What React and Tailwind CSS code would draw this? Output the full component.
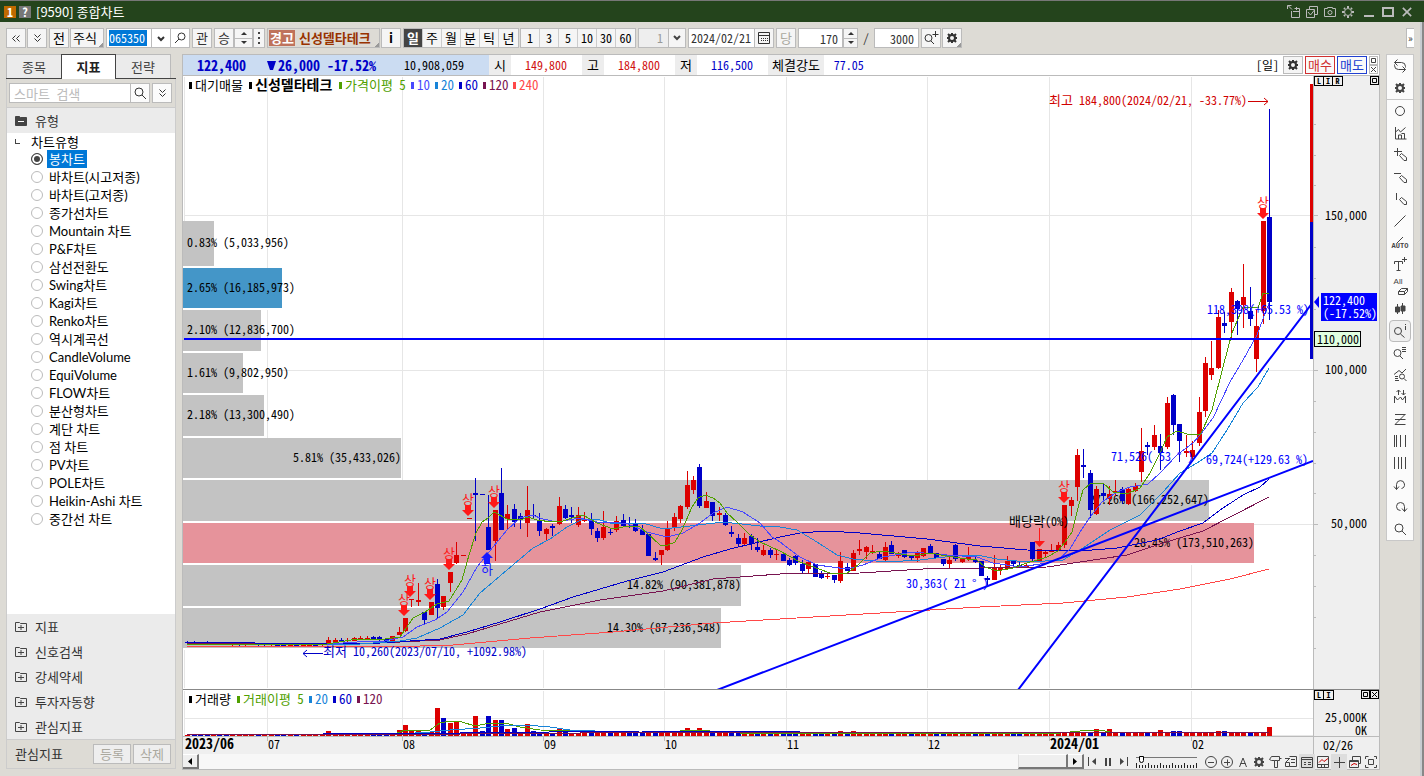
import { useState } from "react";
import clsx from "clsx";

const RED = "#dc0000";
const BLUE = "#0000c8";

// direction, high, body top, body bottom, low (y on the price pane)
const CANDLES = [
    ["d", 641, 642, 643, 644], ["d", 641, 642, 643, 644], ["d", 642, 642, 643, 644], ["d", 641, 642, 644, 645],
    ["u", 642, 643, 644, 645], ["d", 642, 643, 644, 645], ["d", 643, 643, 645, 645], ["u", 643, 643, 645, 646],
    ["d", 643, 644, 645, 646], ["u", 643, 644, 645, 646], ["u", 643, 644, 645, 645], ["d", 643, 644, 645, 646],
    ["d", 644, 644, 645, 646], ["u", 643, 644, 645, 646], ["d", 644, 645, 646, 646], ["d", 644, 645, 646, 646],
    ["u", 644, 645, 646, 646], ["d", 644, 645, 646, 647], ["u", 644, 645, 646, 646], ["u", 644, 645, 646, 646],
    ["d", 644, 645, 646, 646], ["u", 643, 644, 645, 646], ["u", 637, 640, 643, 643], ["u", 638, 640, 642, 642],
    ["d", 638, 640, 642, 642], ["u", 638, 640, 641, 642], ["u", 637, 638, 641, 641], ["u", 636, 638, 639, 640],
    ["u", 636, 638, 639, 640], ["d", 636, 637, 639, 639], ["d", 636, 637, 639, 641], ["d", 638, 639, 642, 643],
    ["u", 636, 636, 641, 641], ["u", 627, 632, 635, 635], ["u", 618, 618, 631, 632], ["u", 599, 599, 600, 607],
    ["u", 583, 600, 602, 606], ["d", 612, 612, 620, 625], ["u", 602, 602, 615, 615], ["d", 579, 584, 608, 619],
    ["u", 596, 596, 607, 610], ["u", 572, 572, 583, 592], ["u", 542, 555, 563, 564], ["u", 555, 555, 556, 556],
    ["u", 518, 518, 519, 519], ["d", 478, 493, 495, 541], ["d", 494, 494, 495, 495], ["d", 495, 527, 550, 550],
    ["u", 510, 510, 541, 561], ["d", 468, 493, 530, 530], ["u", 505, 514, 519, 529], ["d", 504, 509, 522, 527],
    ["d", 513, 516, 519, 529], ["u", 486, 510, 523, 537], ["d", 504, 515, 516, 518], ["d", 513, 520, 531, 536],
    ["u", 528, 529, 534, 540], ["d", 524, 526, 528, 536], ["u", 497, 506, 524, 525], ["d", 505, 509, 518, 519],
    ["d", 507, 515, 517, 523], ["u", 507, 515, 525, 527], ["u", 512, 520, 521, 522], ["d", 513, 521, 529, 535],
    ["d", 528, 531, 538, 542], ["u", 511, 527, 538, 540], ["d", 529, 532, 533, 535], ["u", 516, 521, 530, 532],
    ["d", 514, 520, 526, 526], ["d", 517, 523, 524, 528], ["d", 519, 524, 531, 532], ["d", 525, 530, 535, 535],
    ["d", 534, 534, 556, 556], ["d", 552, 558, 560, 561], ["u", 550, 550, 555, 565], ["u", 521, 529, 550, 551],
    ["u", 513, 517, 527, 531], ["u", 505, 506, 519, 523], ["u", 471, 485, 507, 509], ["u", 476, 480, 490, 494],
    ["d", 464, 467, 506, 508], ["u", 492, 501, 508, 508], ["d", 502, 502, 516, 521], ["u", 507, 513, 515, 521],
    ["d", 513, 515, 525, 526], ["d", 526, 532, 534, 537], ["d", 534, 538, 544, 546], ["u", 533, 538, 544, 545],
    ["d", 534, 536, 544, 550], ["d", 538, 547, 550, 552], ["u", 545, 550, 555, 556], ["d", 548, 550, 555, 558],
    ["u", 550, 554, 555, 560], ["d", 554, 554, 561, 561], ["d", 558, 560, 565, 566], ["d", 555, 556, 563, 565],
    ["d", 560, 564, 571, 573], ["u", 562, 562, 569, 573], ["d", 564, 564, 577, 577], ["d", 571, 573, 578, 579],
    ["u", 573, 576, 577, 579], ["d", 575, 575, 580, 583], ["u", 552, 561, 581, 583], ["d", 563, 567, 571, 571],
    ["u", 550, 553, 571, 571], ["u", 540, 549, 551, 555], ["u", 546, 547, 552, 559], ["u", 545, 551, 553, 554],
    ["d", 552, 554, 559, 559], ["u", 542, 547, 560, 562], ["d", 541, 545, 554, 554], ["u", 552, 554, 556, 558],
    ["d", 550, 550, 557, 558], ["d", 556, 556, 558, 561], ["u", 551, 553, 558, 562], ["u", 548, 548, 556, 557],
    ["d", 544, 546, 553, 553], ["d", 553, 553, 558, 558], ["d", 559, 559, 564, 566], ["u", 556, 560, 564, 568],
    ["d", 544, 545, 559, 561], ["u", 559, 559, 562, 563], ["u", 547, 556, 559, 561], ["d", 556, 560, 562, 563],
    ["d", 561, 561, 576, 576], ["d", 576, 578, 580, 585], ["u", 555, 567, 580, 580], ["u", 565, 567, 570, 575],
    ["u", 556, 561, 569, 570], ["d", 561, 561, 564, 566], ["d", 562, 565, 567, 568], ["u", 563, 565, 567, 568],
    ["d", 542, 542, 559, 561], ["u", 549, 549, 561, 561], ["u", 550, 552, 554, 557], ["u", 544, 550, 552, 552],
    ["u", 542, 545, 550, 550], ["u", 505, 505, 545, 548], ["u", 497, 500, 506, 516], ["u", 449, 455, 487, 501],
    ["d", 449, 465, 467, 478], ["d", 470, 473, 510, 518], ["u", 486, 489, 514, 515], ["d", 483, 493, 496, 500],
    ["u", 486, 494, 499, 505], ["u", 480, 491, 493, 496], ["d", 487, 489, 501, 504], ["u", 487, 489, 504, 505],
    ["u", 483, 486, 491, 492], ["u", 428, 451, 472, 482], ["d", 442, 445, 447, 455], ["u", 425, 435, 447, 450],
    ["d", 434, 446, 453, 470], ["u", 397, 403, 447, 449], ["d", 394, 395, 425, 435], ["d", 424, 424, 441, 462],
    ["u", 435, 451, 453, 457], ["u", 441, 450, 457, 459], ["u", 397, 412, 443, 446], ["u", 357, 363, 411, 417],
    ["u", 341, 368, 375, 380], ["u", 310, 317, 368, 369], ["d", 312, 323, 326, 333], ["u", 288, 292, 322, 338],
    ["d", 300, 301, 309, 335], ["u", 264, 297, 305, 328], ["d", 287, 311, 319, 326], ["u", 310, 326, 359, 372],
    ["u", 221, 221, 311, 324], ["d", 109, 217, 302, 320],
];

const candleX = (i) => Math.round(1269 - (169 - i) * 6.4);

const AVERAGES = [
    ["#ff4848", "187,646 420,646 453,645 530,638 613,632 713,623 780,619 913,611 980,607 1063,603 1127,597 1180,589 1230,579 1269,569"],
    ["#781450", "187,644 380,643 440,640 467,634 500,624 540,612 600,600 663,591 713,579 780,574 860,573 923,569 980,568 1047,567 1080,562 1127,555 1163,543 1203,531 1230,517 1269,497"],
    ["#0000c8", "185,642 254,642 255,643 380,643 440,639 467,632 500,622 540,609 573,597 627,581 663,572 703,557 730,549 780,537 800,533 827,531 860,533 927,539 980,546 1027,550 1080,551 1117,548 1157,540 1180,531 1203,523 1223,508 1243,495 1260,487 1269,479"],
    ["#1884d8", "187,644 360,644 400,641 417,638 440,628 463,615 480,593 507,570 533,548 550,539 567,527 583,519 597,519 610,523 643,523 663,529 690,526 723,522 760,526 780,527 797,530 817,542 837,555 853,559 887,562 920,560 953,556 977,555 997,559 1027,562 1063,560 1083,548 1110,530 1140,515 1163,492 1180,473 1197,463 1212,453 1227,430 1243,403 1258,387 1269,368"],
    ["#4848ff", "187,644 330,644 357,642 385,641 403,637 417,627 435,620 447,612 463,592 477,567 493,547 507,530 520,518 532,515 543,519 557,522 580,518 597,522 613,522 628,524 647,532 667,537 683,533 700,523 713,513 727,507 743,512 760,523 772,537 780,542 800,557 817,565 847,569 863,565 883,557 913,552 947,555 977,557 993,563 1020,567 1047,563 1060,558 1070,549 1080,532 1090,517 1102,502 1117,492 1130,487 1148,484 1160,473 1177,455 1193,443 1200,435 1213,418 1230,382 1243,360 1257,335 1269,303"],
    ["#50a000", "187,644 327,644 345,641 357,639 385,639 400,637 413,618 425,612 437,604 449,601 462,580 469,555 476,533 482,522 488,518 494,512 507,519 520,520 528,517 537,520 552,522 563,521 572,518 583,515 597,523 613,529 628,526 640,527 647,533 660,545 668,545 675,542 682,530 692,507 698,498 705,495 713,498 720,503 727,513 737,522 750,535 760,542 780,551 800,562 830,573 847,573 858,565 870,553 883,551 913,556 930,553 947,556 967,559 977,560 985,567 997,571 1013,568 1027,563 1047,557 1058,551 1065,542 1072,532 1078,508 1083,490 1090,484 1103,483 1113,492 1127,494 1140,488 1150,473 1160,453 1167,437 1177,431 1187,434 1200,435 1212,410 1223,367 1232,333 1243,307 1258,308 1263,293 1269,293"],
];

// y, height, right edge, colour, label, label right edge
const PROFILE = [
    [221, 45, 214, "#c3c3c3", "0.83% (5,033,956)", 289],
    [268, 40, 282, "#4496c8", "2.65% (16,185,973)", 295],
    [310, 41, 261, "#c3c3c3", "2.10% (12,836,700)", 295],
    [353, 40, 243, "#c3c3c3", "1.61% (9,802,950)", 289],
    [395, 41, 264, "#c3c3c3", "2.18% (13,300,490)", 295],
    [438, 40, 401, "#c3c3c3", "5.81% (35,433,026)", 401],
    [480, 41, 1209, "#c3c3c3", "27.26% (166,252,647)", 1209],
    [523, 40, 1254, "#e6939b", "28.45% (173,510,263)", 1254],
    [565, 41, 741, "#c3c3c3", "14.82% (90,381,878)", 741],
    [608, 40, 721, "#c3c3c3", "14.30% (87,236,548)", 721],
];

const MONTHS = [184, 267, 402, 543, 664, 786, 927, 1049, 1191];

// tops of the taller volume bars, the rest stay near the base line
const VOLUME_TOPS = {
    22: 731, 33: 730, 34: 725, 35: 731, 36: 730, 37: 733, 38: 732, 39: 708, 40: 718, 41: 723, 42: 722,
    45: 716, 46: 731, 47: 716, 48: 720, 49: 720, 50: 729, 51: 728, 52: 732, 53: 724, 54: 731, 58: 728,
    59: 731, 65: 732, 77: 731, 78: 728, 79: 730, 80: 728, 81: 731, 102: 731, 104: 731,
    139: 731, 142: 729, 144: 729, 152: 730, 154: 731, 155: 731, 161: 731, 162: 731, 169: 727,
};

// bars coloured by volume change rather than by the candle
const VOLUME_UP = { 39: true, 40: false, 45: true, 169: true };

const CHART_TYPES = [
    "봉차트", "바차트(시고저종)", "바차트(고저종)", "종가선차트", "Mountain 차트", "P&F차트", "삼선전환도",
    "Swing차트", "Kagi차트", "Renko차트", "역시계곡선", "CandleVolume", "EquiVolume", "FLOW차트",
    "분산형차트", "계단 차트", "점 차트", "PV차트", "POLE차트", "Heikin-Ashi 차트", "중간선 차트",
];

const ICONS = {
    doubleLeft: <path d="M7.5 5.5l-3 3 3 3M11.5 5.5l-3 3 3 3" />,
    doubleDown: <path d="M5.5 4.5l3 3 3-3M5.5 8.5l3 3 3-3" />,
    chevron: <path d="M5 7l3 3 3-3" strokeWidth="2" />,
    search: <path d="M11 7a4 4 0 1 1-8 0a4 4 0 1 1 8 0M10 10l4 4" />,
    lensLeft: <path d="M13 6.500a3.500 3.500 0 1 1-7 0a3.500 3.500 0 1 1 7 0M7 9l-4 4" />,
    lensPlus: <path d="M9 8a3.5 3.5 0 1 1-7 0a3.5 3.5 0 1 1 7 0M8 11l3 3M12.500 1v6M9.500 4.500h6" />,
    calendar: <g><path d="M2.500 2.500h11v11h-11zM2.500 5.500h11" /><path d="M5 8.500h7M5 10.500h7" strokeDasharray="1 1" /></g>,
    gear: (
        <g>
            <circle cx="8" cy="8" r="3" strokeWidth="2" />
            <path d="M8 3v2M8 11v2M3 8h2M11 8h2M4 4l2 2M10 10l2 2M4 12l2-2M10 6l2-2" strokeWidth="2" />
        </g>
    ),
    gearThin: (
        <g>
            <circle cx="8" cy="8" r="3.500" />
            <path d="M8 2v2M8 12v2M2 8h2M12 8h2M4 4l1 1M11 11l1 1M4 12l1-1M11 5l1-1" strokeWidth="2" />
        </g>
    ),
    swap: <path d="M5.500 1.500l-3 3 3 3M2.500 4.500h7a4 4 0 0 1 4 4v1M10.500 8.500l3 3-3 3M13.500 11.500h-7a4 4 0 0 1-4-4v-1" />,
    circle: <circle cx="8" cy="8" r="4.500" />,
    trend: <path d="M3.500 2v12h11M3.500 7l3-2.500 2 2.500 5-4.500M6.500 14v-4h3v4M9.500 8.500h3v5.500" />,
    penCross: <g><path d="M5.500 1v8M2 4.500h8" /><path d="M7.500 8.500l2-2 5 4v3h-2.500z" /></g>,
    penFlat: <g><path d="M2 4.500h7" /><path d="M7.500 8.500l2-2 5 4v3h-2.500z" /></g>,
    penTall: <g><path d="M4.500 2v7" /><path d="M7.500 8.500l2-2 5 4v3h-2.500z" /></g>,
    line: <path d="M2.500 13.500l11-11" />,
    textPlus: <path d="M2.500 7v-2.500h8v2.500M6.500 4.500v9M4.500 13.500h4M12.500 0v5M10 2.500h5" />,
    eraser: <path d="M4.500 10.500l3-3h6v3l-3 3h-6zM4.500 10.500h6l3-3M10.500 10.500v3" />,
    candles: <g><path d="M5.500 3v10M10.500 2v11" /><path d="M3.500 6h4v5h-4zM9 5h4v5h-4z" fill="#444" /></g>,
    lensInfo: <path d="M9.500 8a3.500 3.500 0 1 1-7 0a3.500 3.500 0 1 1 7 0M8.500 11l4 3.500M13.500 1v1M13.500 3v4" />,
    lensList: <path d="M9 8a3.500 3.500 0 1 1-7 0a3.500 3.500 0 1 1 7 0M8 11l3 3M10 2.500h4M10 4.500h4M10 6.500h4" />,
    lensTrend: <path d="M2 7.500l5-4 3 2.500 4-4M3 9.500h3M3 11.500h3M3 13.500h4M12.500 9.500a2.500 2.500 0 1 1-5 0a2.500 2.500 0 1 1 5 0M12 11.500l2.500 2.500" />,
    waves: <path d="M2.500 14v-7l3 4 3-3 2 3 3-4v7M6.500 6v-5M4.500 3l2-2 2 2M11.500 1v5M9.500 4l2 2 2-2" />,
    zLines: <path d="M3 3.500h10.500M3 8.500h10.500M3 13.500h10.500M13 3.500l-10 10" />,
    bars1: <path d="M2.500 2v12M4.500 2v12M8.500 2v12M13.500 2v12" />,
    bars2: <path d="M2.500 2v12M6.500 2v12M9.500 2v12M13.500 2v12" />,
    undo: <path d="M4.500 12.500v-5a4 4 0 1 1 5 4M2 9.500l2.500 3 2.500-3" />,
    redo: <path d="M8.500 11.500a4 4 0 1 1 4-4v5M10 9.500l2.500 3 2.500-3" />,
    first: <g><path d="M4.500 3v9" /><path d="M12 4v7l-4-3.500z" fill="#444" stroke="none" /></g>,
    pause: <path d="M6 4v8M10 4v8" strokeWidth="2" />,
    last: <g><path d="M11.500 3v9" /><path d="M4 4v7l4-3.500z" fill="#444" stroke="none" /></g>,
    minus: <g><circle cx="8" cy="8" r="5.500" /><path d="M5 8.500h6" /></g>,
    plus: <g><circle cx="8" cy="8" r="5.500" /><path d="M5 8.500h6M8.500 5.500v6" /></g>,
    letterShape: <path d="M4.500 13l3.500-9 3.500 9M5.500 9.500h5" />,
    hammer: <path d="M2.500 5.500l2-3h8v4h-2v7h-3v-7h-3zM12.500 4.500h2M7.500 6.500h3" />,
    export: <path d="M6.500 2.500h7v10h-7M8 5.500h4M8 8.500h4M2.500 8.500h4v4h-4zM3 8l4-4M2 4.500h4" />,
    panel: <path d="M2.500 3.500h11v10h-11zM2.500 5.500h11M5 8.500h2M5 10.500h2M9 8.500h3M9 10.500h3" />,
    chartBox: <g><path d="M2.500 2.500h11v11h-11zM2.500 10.500h11M6.500 10.500v3M9.500 10.500v3" /><path d="M4 8.500l3-3 2 2 4-3" stroke="#c00" /></g>,
    cross: <path d="M8.500 3v11M3 8.500h11" />,
    stack: <g><path d="M5.500 6v-3.500h8v7h-2" /><path d="M2.500 6.500h9v7h-9zM2.500 7.500h9" /><path d="M4 11.500l3-2 3 1" stroke="#c00" /></g>,
    expand: <path d="M5.500 5.500h5v5h-5zM2.500 5v-2.500h3M11 2.500h2.500v2.500M13.500 11v2.500h-2.500M5.500 13.500h-3v-2.500" />,
    windowOut: <path d="M5.500 7v6.500h8v-9h-5M7 7.500h6M10.500 3v3M6 5.500l-4-4M1.500 5v-3.500h4" />,
    windowCheck: <path d="M2.500 5.500h8v8h-8zM5.500 5v-2.500h8v8h-2.500M4 8l2.500 3 4-5" />,
    camera: <g><path d="M2.500 4.500h3v-1h5v1h3v8h-11z" /><circle cx="8" cy="8.500" r="2" /></g>,
};

export default function App() {
    const [chartType, setChartType] = useState("봉차트");
    const [period, setPeriod] = useState("일");
    const [code, setCode] = useState("065350");

    return (
        <div className="flex min-h-screen flex-col border-t border-[#777] bg-[#dddbd5] font-['Noto_Sans_Mono_CJK_KR','Noto_Sans_CJK_KR',monospace] text-xs leading-4 text-[#222]">
            <TitleBar />
            <div className="flex flex-1 border-r-2 border-[#888]">
                <div className="flex min-w-0 flex-1 flex-col border-r-2 border-[#c8ccd0]">
                    <Toolbar period={period} setPeriod={setPeriod} code={code} setCode={setCode} />
                    <main className="flex flex-1 items-start pr-1.5 pl-1.5">
                        <Sidebar chartType={chartType} setChartType={setChartType} />
                        <ChartPanel />
                        <ToolStrip />
                    </main>
                </div>
            </div>
        </div>
    );
}

function TitleBar() {
    return (
        <header className="flex h-[21px] items-center bg-[#24441c] pr-3 pl-1 text-white">
            <span className="flex size-3 items-center justify-center bg-[#c06a00] font-bold">1</span>
            <button aria-label="도움말" className="ml-[3px] flex size-3 items-center justify-center bg-[#777] font-bold">?</button>
            <h1 className="ml-[5px] font-['Noto_Sans_CJK_KR',sans-serif] text-[13px]">[9590] 종합차트</h1>
            <div className="ml-auto flex items-center gap-0.5 text-[#bbb]">
                <IconButton icon="windowOut" label="창 분리" />
                <IconButton icon="windowCheck" label="창 선택" />
                <IconButton icon="camera" label="화면 캡처" />
                <IconButton icon="gearThin" label="설정" />
                <button aria-label="최소화" className="ml-1.5 h-2.5 w-2.5 border-b-2 border-[#bbb]" />
                <button aria-label="최대화" className="mx-1.5 h-2.5 w-3 border-2 border-[#bbb]" />
                <button aria-label="닫기">
                    <svg className="size-2.5" viewBox="0 0 12 12" fill="none" stroke="currentColor" strokeWidth="2"><path d="M1 1l10 10M11 1l-10 10" /></svg>
                </button>
            </div>
        </header>
    );
}

function Toolbar({ period, setPeriod, code, setCode }) {
    return (
        <div className="flex h-8 items-center pl-1.5 text-[#333]">
            <BoxButton className="w-5"><Icon name="doubleLeft" /></BoxButton>
            <BoxButton className="ml-px w-5"><Icon name="doubleDown" /></BoxButton>
            <BoxButton className="ml-0.5 w-5 text-black">전</BoxButton>
            <BoxButton className="ml-px w-[34px] pr-1 text-black" corner>주식</BoxButton>
            <div className="ml-0.5 flex h-5 items-center border border-[#bbb] bg-white">
                <input
                    aria-label="종목코드"
                    value={code}
                    onChange={(e) => setCode(e.target.value)}
                    className="mx-0.5 w-[38px] bg-[#0078d7] text-white outline-none"
                />
                <button aria-label="종목 목록" className="ml-0.5 h-full border-l border-[#bbb] pl-px"><Icon name="chevron" /></button>
                <button aria-label="종목 찾기" className="ml-px h-full border-l border-[#bbb] px-px"><Icon name="lensLeft" /></button>
            </div>
            <BoxButton className="ml-0.5 w-5">관</BoxButton>
            <BoxButton className="ml-0.5 w-5">승</BoxButton>
            <Spinner className="w-[19px]" />
            <button aria-label="더보기" className="flex h-5 w-3 flex-col items-center justify-center gap-[3px] border border-[#bbb] bg-[#f5f5f5]">
                <i className="size-0.5 bg-[#444]" />
                <i className="size-0.5 bg-[#444]" />
                <i className="size-0.5 bg-[#444]" />
            </button>
            <button className="relative ml-0.5 flex h-5 w-[113px] shrink-0 items-center border border-[#bbb] pl-px text-[13px] font-bold text-[#983200]">
                <span className="mr-1 bg-[#bf735c] px-px leading-4 text-white">경고</span>신성델타테크
                <Corner />
            </button>
            <BoxButton className="ml-px w-5 font-bold text-black">i</BoxButton>

            <div className="ml-0.5 flex h-5 border border-[#bbb] bg-[#f5f5f5] text-[13px] text-black">
                {["일", "주", "월", "분", "틱", "년"].map((p) => (
                    <button
                        key={p}
                        onClick={() => setPeriod(p)}
                        className={clsx("w-[19px] border-r border-[#ccc] last:border-r-0", p === period && "bg-[#444] font-bold text-white")}
                    >
                        {p}
                    </button>
                ))}
            </div>
            <div className="ml-px flex h-5 border border-[#bbb] bg-[#f5f5f5] text-black">
                {["1", "3", "5", "10", "30", "60"].map((m) => (
                    <button key={m} className="w-[19px] border-r border-[#ccc] last:border-r-0">{m}</button>
                ))}
            </div>
            <div className="relative ml-0.5 h-5 w-12 border border-[#bbb] bg-[#eee] text-[#999]">
                <select aria-label="분 간격" className="h-full w-full appearance-none pr-[22px] text-right outline-none">
                    <option>1</option>
                </select>
                <span className="pointer-events-none absolute top-0 right-0 h-full border-l border-[#bbb] bg-[#f5f5f5] text-[#444]"><Icon name="chevron" /></span>
            </div>
            <div className="ml-0.5 flex h-5 items-center border border-[#bbb] bg-white">
                <input aria-label="조회일" defaultValue="2024/02/21" className="w-[65px] pl-0.5 outline-none" />
                <button aria-label="달력" className="h-full border-l border-[#bbb] bg-[#f5f5f5] px-px"><Icon name="calendar" /></button>
            </div>
            <BoxButton className="ml-0.5 w-5 text-[#aaa89e]">당</BoxButton>
            <input aria-label="표시 봉수" defaultValue="170" className="ml-0.5 h-5 w-[45px] border border-[#bbb] bg-white pr-1 text-right outline-none" />
            <Spinner className="w-[15px]" />
            <span className="mx-[5px]">/</span>
            <input aria-label="전체 봉수" defaultValue="3000" className="h-5 w-[45px] border border-[#bbb] bg-white pr-1 text-right outline-none" />
            <BoxButton className="ml-0.5 w-5"><Icon name="lensPlus" /></BoxButton>
            <BoxButton className="ml-px w-5" corner><Icon name="gear" /></BoxButton>
            <button aria-label="도구 펼치기" className="mr-1.5 ml-auto h-5 w-2 border border-r-0 border-[#bbb] bg-white text-[10px]">»</button>
        </div>
    );
}

function Sidebar({ chartType, setChartType }) {
    return (
        <aside className="flex w-[170px] shrink-0 flex-col text-[13px] text-[#333]">
            <div className="flex h-[25px] border-b border-[#444] text-[#444]">
                <button className="w-[55px] border-t border-l border-[#bbb] bg-[#ebebeb]">종목</button>
                <button className="-mb-px w-[55px] border border-b-0 border-[#444] bg-white font-bold text-[#222]">지표</button>
                <button className="w-[55px] border-t border-r border-[#bbb] bg-[#ebebeb]">전략</button>
            </div>
            <div className="flex h-7 items-center border-x border-[#ccc] px-0.5">
                <input
                    aria-label="검색"
                    placeholder="스마트 검색"
                    className="h-5 w-[122px] border border-[#bbb] bg-white px-1 outline-none placeholder:text-[#bbb]"
                />
                <button aria-label="찾기" className="-ml-px flex size-5 items-center justify-center border border-[#bbb] bg-[#fbfbfb]"><Icon name="search" /></button>
                <button aria-label="옵션" className="ml-0.5 flex size-5 items-center justify-center border border-[#bbb] bg-[#fbfbfb]"><Icon name="doubleDown" /></button>
            </div>
            <div className="flex flex-col border border-[#ccc]">
                <button className="flex h-[25px] items-center gap-2 bg-[#ebebeb] pl-2">
                    <Folder open />유형
                </button>
                <div className="h-[481px] bg-white font-['Lato','Noto_Sans_CJK_KR',sans-serif] leading-[18px] text-black">
                    <div className="flex h-[17px] items-center pl-2 leading-4">
                        <i className="mr-[11px] size-[5px] border-b border-l border-[#444]" />차트유형
                    </div>
                    {CHART_TYPES.map((type) => (
                        <label key={type} className="flex h-[18px] items-center pl-6">
                            <input
                                type="radio"
                                name="chartType"
                                checked={chartType === type}
                                onChange={() => setChartType(type)}
                                className="mr-1 size-3 shrink-0 appearance-none rounded-full border border-[#bbb] bg-white checked:border-[#444] checked:bg-[#444] checked:shadow-[inset_0_0_0_2px_white]"
                            />
                            <span className={clsx("px-0.5", chartType === type && "bg-[#0078d7] text-white")}>{type}</span>
                        </label>
                    ))}
                </div>
                {["지표", "신호검색", "강세약세", "투자자동향", "관심지표"].map((name) => (
                    <button key={name} className="flex h-[25px] items-center gap-2 bg-[#ebebeb] pl-2">
                        <Folder />{name}
                    </button>
                ))}
                <div className="flex h-[29px] items-center border-t border-[#ccc] pr-1 pl-2">
                    <span className="mr-auto">관심지표</span>
                    <button className="h-5 w-[38px] border border-[#bbb] bg-[#eee] text-[#aaa89e]">등록</button>
                    <button className="ml-0.5 h-5 w-[38px] border border-[#bbb] bg-[#eee] text-[#aaa89e]">삭제</button>
                </div>
            </div>
        </aside>
    );
}

function ChartPanel() {
    return (
        <section className="mx-1.5 flex min-w-0 flex-1 flex-col border border-[#bbb] bg-white">
            <Quote />
            <div className="flex h-[614px] border-b border-[#888]">
                <PriceChart />
                <div className="relative w-[66px] shrink-0 border-l border-[#bbb] bg-[#efefef]">
                    <AxisButtons left={["L", "I", "R"]} />
                    <PriceAxis />
                </div>
            </div>
            <div className="flex h-[47px] border-b border-[#bbb]">
                <VolumeChart />
                <div className="relative w-[66px] shrink-0 border-l border-[#bbb] bg-[#efefef]">
                    <AxisButtons left={["L", "I"]} closable />
                    <div className="flex flex-col items-end pt-5 pr-3 leading-[13px] text-black">
                        <span>25,000K</span>
                        <span>0K</span>
                    </div>
                </div>
            </div>
            <div className="flex h-[17px] bg-[#efefef] text-black">
                <svg className="h-full min-w-0 flex-1 overflow-visible" fill="currentColor">
                    <text x="2" y="12" className="text-sm font-bold">2023/06</text>
                    {["07", "08", "09", "10", "11", "12", "2024/01", "02"].map((label, i) => (
                        <g key={label}>
                            <path d={`M${MONTHS[i + 1] - 182.5} 0v4`} stroke="#bbb" />
                            <text x={MONTHS[i + 1] - 182} y="12" className={clsx(label.length > 2 && "text-sm font-bold")}>{label}</text>
                        </g>
                    ))}
                </svg>
                <div className="w-[66px] shrink-0 border-l border-[#bbb] pl-[9px]">02/26</div>
            </div>
            <Player />
        </section>
    );
}

function Quote() {
    return (
        <div className="flex h-[21px] items-stretch border-b border-[#bbb] leading-5 text-black">
            <div className="flex w-[306px] shrink-0 bg-[#cbdcf2] pl-3.5">
                <strong className="w-[70px] text-sm leading-5 text-[#0000c8]">122,400</strong>
                <strong className="flex w-[137px] items-center text-sm leading-5 text-[#0000c8]">
                    <svg className="mr-0.5 size-[9px]" viewBox="0 0 9 9" fill="currentColor"><path d="M0 0h9l-3 9h-3z" /></svg>
                    26,000 -17.52%
                </strong>
                <span>10,908,059</span>
            </div>
            <QuoteCell label="시" value="149,800" className="text-[#d01010]" />
            <QuoteCell label="고" value="184,800" className="text-[#d01010]" />
            <QuoteCell label="저" value="116,500" className="text-[#0000c8]" />
            <span className="bg-[#ededed] px-1 text-[13px] leading-5">체결강도</span>
            <span className="pl-2.5 text-[#0000c8]">77.05</span>
            <div className="ml-auto flex items-center gap-0.5 pr-px">
                <span className="mr-0.5">[일]</span>
                <button aria-label="시세 설정" className="flex h-[18px] w-5 items-center justify-center border border-[#bbb] bg-[#f5f5f5] text-[#333]"><Icon name="gear" /></button>
                <button className="h-[18px] w-[30px] border border-[#d03030] bg-[#fafafa] text-[13px] leading-4 text-[#d03030]">매수</button>
                <button className="h-[18px] w-[30px] border border-[#2040d0] bg-[#fafafa] text-[13px] leading-4 text-[#2040d0]">매도</button>
                <div className="flex w-[9px] flex-col">
                    <BoxMark />
                    <BoxMark close />
                </div>
            </div>
        </div>
    );
}

function QuoteCell({ label, value, className }) {
    return (
        <div className="flex w-[93px]">
            <span className="w-[22px] bg-[#ededed] text-center text-[13px] leading-5">{label}</span>
            <span className={clsx("flex-1 pr-[15px] text-right", className)}>{value}</span>
        </div>
    );
}

function PriceChart() {
    return (
        <svg className="h-full min-w-0 flex-1 text-black" fill="currentColor">
            <g transform="translate(-183 -76)">
                <g stroke="#e6e6e6" shapeRendering="crispEdges">
                    {MONTHS.map((x) => <path key={x} d={`M${x}.5 77v611`} />)}
                    <path d="M184 215.500h1129M184 370.500h1129M184 524.500h1129" />
                </g>
                {PROFILE.map(([y, h, right, color]) => (
                    <g key={y}>
                        <rect x="183" y={y} width={right - 183} height={h} fill={color} />
                        <path d={`M183 ${y + h + 1}h${right - 183}`} stroke="#fff" strokeWidth="2" />
                    </g>
                ))}
                {PROFILE.map(([y, , , , label, right]) => (
                    <text key={y} x={right} y={y === 221 ? 247 : y + 24} textAnchor="end">{label}</text>
                ))}

                <g shapeRendering="crispEdges">
                    {CANDLES.map(([dir, high, top, bottom, low], i) => {
                        const x = candleX(i);
                        return (
                            <g key={i} fill={dir === "u" ? RED : BLUE}>
                                <rect x={x} y={high} width="1" height={low - high} />
                                <rect x={x - 2} y={top} width="5" height={bottom - top} />
                            </g>
                        );
                    })}
                </g>
                <g fill="none" shapeRendering="crispEdges">
                    {AVERAGES.map(([color, points]) => <polyline key={color} points={points} stroke={color} />)}
                </g>
                <g stroke="#0000ff" strokeWidth="2">
                    <path d="M184 339h1129M717 690l596-229M1018 690l295-388" />
                </g>
                <path d="M1310 84h3v138h-3z" fill={RED} />
                <path d="M1310 222h3v137h-3z" fill={BLUE} />

                <Signal x={404} y={605} />
                <Signal x={410} y={586} />
                <Signal x={430} y={589} />
                <Signal x={449} y={559} />
                <Signal x={468} y={505} />
                <Signal x={494} y={497} />
                <Signal x={1064} y={492} />
                <Signal x={1263} y={208} />
                <g fill="#1818ff">
                    <path d="M487 552l6 6h-3v6h-6v-6h-3z" />
                    <text x="487" y="574" textAnchor="middle" className="text-[13px]">하</text>
                </g>
                <text x="1009" y="526"><tspan className="text-[13px]">배당락</tspan>(0%)</text>
                <path d="M1039.500 528v13" stroke="#ff1818" />
                <path d="M1034 541h11l-5.500 6z" fill="#ff1818" />

                <g fill="#d00000">
                    <text x="1049" y="105"><tspan className="text-[13px]">최고</tspan> 184,800(2024/02/21, -33.77%)</text>
                    <path d="M1248 101.500h20M1264 98l4 3.500-4 3.500" fill="none" stroke="#d00000" />
                </g>
                <g fill={BLUE}>
                    <text x="323" y="656"><tspan className="text-[13px]">최저</tspan> 10,260(2023/07/10, +1092.98%)</text>
                    <path d="M323 653.500h-20M307 650l-4 3.500 4 3.500" fill="none" stroke={BLUE} />
                </g>
                <g fill="#0000ff">
                    <text x="1207" y="314">118,398(+65.53 %)</text>
                    <text x="1206" y="464">69,724(+129.63 %)</text>
                    <text x="1111" y="461">71,526( 53 ° )</text>
                    <text x="906" y="588">30,363( 21 ° )</text>
                </g>

                <Legend x={189} y={90} color="#000">대기매물</Legend>
                <Legend x={249} y={90} color="#000" bold>신성델타테크</Legend>
                <Legend x={339} y={90} color="#50a000">가격이평 5</Legend>
                <Legend x={411} y={90} color="#4848ff">10</Legend>
                <Legend x={435} y={90} color="#1884d8">20</Legend>
                <Legend x={459} y={90} color="#0000c8">60</Legend>
                <Legend x={483} y={90} color="#781450">120</Legend>
                <Legend x={513} y={90} color="#ff4848">240</Legend>
            </g>
        </svg>
    );
}

function Signal({ x, y }) {
    return (
        <g fill="#ff1818">
            <text x={x} y={y - 1} textAnchor="middle" className="text-[13px]">상</text>
            <path d={`M${x - 3} ${y}h6v5h3l-6 6l-6 -6h3z`} />
        </g>
    );
}

function Legend({ x, y, color, bold, children }) {
    return (
        <g fill={color}>
            <rect x={x} y={y - 8} width="3" height="7" />
            <text x={x + 6} y={y} className={bold ? "text-sm font-bold" : "text-[13px]"}>{children}</text>
        </g>
    );
}

function PriceAxis() {
    return (
        <svg className="h-full w-full text-black" fill="currentColor">
            <g transform="translate(-1314 -76)">
                <g stroke="#bbb">
                    <path d="M1314 215.500h4M1314 370.500h4M1314 524.500h4" />
                    <path d="M1314 124.500h2M1314 155.500h2M1314 185.500h2M1314 247.500h2M1314 278.500h2M1314 309.500h2M1314 401.500h2M1314 432.500h2M1314 463.500h2M1314 493.500h2M1314 555.500h2M1314 586.500h2M1314 617.500h2M1314 648.500h2" />
                </g>
                <text x="1325" y="220">150,000</text>
                <text x="1325" y="374">100,000</text>
                <text x="1331" y="528">50,000</text>
                <path d="M1314 302l5-6v12z" fill="#0000ff" />
                <rect x="1321" y="293" width="56" height="28" fill="#0000ff" />
                <g fill="#fff">
                    <text x="1323" y="305">122,400</text>
                    <text x="1323" y="318">(-17.52%)</text>
                </g>
                <rect x="1314.500" y="331.500" width="46" height="15" fill="#e1ffe1" stroke="#000" />
                <text x="1317" y="344">110,000</text>
            </g>
        </svg>
    );
}

function AxisButtons({ left, closable }) {
    return (
        <div className="absolute top-0 left-0 flex w-full justify-between">
            <div className="flex border border-black">
                {left.map((l) => (
                    <button key={l} className="h-2 w-[9px] border-r border-black text-[8px] leading-[8px] font-bold text-black last:border-r-0">{l}</button>
                ))}
            </div>
            <div className="flex">
                <BoxMark dark />
                {closable && <BoxMark dark close />}
            </div>
        </div>
    );
}

function VolumeChart() {
    return (
        <svg className="h-full min-w-0 flex-1 text-black" fill="currentColor">
            <g transform="translate(-183 -690)">
                <g stroke="#e6e6e6" shapeRendering="crispEdges">
                    {MONTHS.map((x) => <path key={x} d={`M${x}.5 691v46`} />)}
                    <path d="M184 718.500h1129M184 735.500h1129" />
                </g>
                <g shapeRendering="crispEdges">
                    {CANDLES.map((c, i) => {
                        const top = VOLUME_TOPS[i] ?? (i > 34 ? 733 : 735);
                        const up = VOLUME_UP[i] ?? (c[0] === "u" || i % 4 === 0);
                        return <rect key={i} x={candleX(i) - 2} y={top} width="5" height={736 - top} fill={up ? RED : BLUE} />;
                    })}
                </g>
                <g fill="none" shapeRendering="crispEdges">
                    <polyline stroke="#50a000" points="330,734 395,734 405,730 430,730 440,723 450,721 462,722 475,726 490,723 505,723 520,727 540,730 580,731 660,733 690,730 710,731 740,733 1060,733 1080,731 1100,730 1110,732 1269,732" />
                    <polyline stroke="#1884d8" points="400,734 430,732 450,730 480,728 500,726 525,725 550,727 570,730 620,732 1269,733" />
                    <polyline stroke="#0000c8" points="187,735 460,733 640,731 800,732 1269,733" />
                    <polyline stroke="#781450" points="187,734 460,734 700,732 1000,732 1269,732" />
                </g>
                <Legend x={189} y={704} color="#000">거래량</Legend>
                <Legend x={237} y={704} color="#50a000">거래이평 5</Legend>
                <Legend x={309} y={704} color="#1884d8">20</Legend>
                <Legend x={333} y={704} color="#0000c8">60</Legend>
                <Legend x={357} y={704} color="#781450">120</Legend>
            </g>
        </svg>
    );
}

function Player() {
    return (
        <div className="flex h-[15px] items-center bg-[#efefef] text-[#444]">
            <ArrowButton label="왼쪽" d="M4 0v7l-4-3.500z" />
            <div className="flex h-full flex-1 justify-end bg-[#f7f7f7]">
                <div className="h-full w-[50px] border-t border-r-2 border-b-2 border-l border-[#777] border-t-white border-l-[#ddd] bg-[#efefef]" />
            </div>
            <ArrowButton label="오른쪽" d="M0 0v7l4-3.500z" />
            <IconButton icon="first" label="처음" />
            <IconButton icon="pause" label="일시정지" />
            <IconButton icon="last" label="마지막" />
            <div className="mr-1.5 ml-1 flex w-[61px] flex-col">
                <input
                    type="range"
                    aria-label="재생 속도"
                    defaultValue="5"
                    className="h-2 w-full appearance-none bg-[linear-gradient(#777,#777)] bg-[length:100%_1px] bg-[position:0_2px] bg-no-repeat [&::-webkit-slider-thumb]:h-[7px] [&::-webkit-slider-thumb]:w-[5px] [&::-webkit-slider-thumb]:appearance-none [&::-webkit-slider-thumb]:rounded-b [&::-webkit-slider-thumb]:border [&::-webkit-slider-thumb]:border-black [&::-webkit-slider-thumb]:bg-white"
                />
                <svg className="h-[5px] w-full">
                    <path d="M0 2.500h61" stroke="#222" strokeWidth="5" strokeDasharray="1 11" />
                    <path d="M0 3.500h61" stroke="#222" strokeWidth="3" strokeDasharray="1 2" />
                </svg>
            </div>
            <div className="flex">
                <IconButton icon="minus" label="축소" />
                <IconButton icon="plus" label="확대" />
                <IconButton icon="letterShape" label="글자" />
                <IconButton icon="gear" label="설정" />
                <IconButton icon="hammer" label="도구" />
                <IconButton icon="export" label="내보내기" />
                <IconButton icon="panel" label="데이터 창" active />
                <IconButton icon="chartBox" label="차트 창" />
                <IconButton icon="cross" label="십자선" active />
                <IconButton icon="stack" label="겹쳐 보기" />
                <IconButton icon="expand" label="전체 화면" />
            </div>
        </div>
    );
}

function ToolStrip() {
    const tools = [
        "circle", "trend", "penCross", "penFlat", "penTall", "line", "auto", "textPlus", "all", "candles", "lensInfo",
        "lensList", "lensTrend", "waves", "zLines", "bars1", "bars2", "undo", "redo", "search",
    ];
    return (
        <nav className="flex w-7 shrink-0 flex-col border border-[#c8c8c8] bg-[#fbfbfb] text-[#444]">
            <div className="flex h-[45px] flex-col items-center border-b border-[#c8c8c8]">
                <button aria-label="전환" className="flex h-[22px] items-center"><Icon name="swap" /></button>
                <button aria-label="설정" className="flex h-[22px] items-center"><Icon name="gear" /></button>
            </div>
            {tools.map((name) => (
                <button
                    key={name}
                    aria-label={name}
                    className={clsx("flex h-[22px] flex-col items-center justify-center", name === "lensInfo" && "mx-0.5 rounded-sm border border-[#bbb] bg-[#efefef]")}
                >
                    {name === "auto" ? (
                        <>
                            <svg className="h-1.5 w-2" fill="none" stroke="currentColor"><path d="M1 6l6-6" /></svg>
                            <span className="font-['Liberation_Mono',monospace] text-[7px] leading-[7px] font-bold">AUTO</span>
                        </>
                    ) : name === "all" ? (
                        <>
                            <span className="mr-1 font-['Liberation_Sans',sans-serif] text-[8px] leading-[7px]">All</span>
                            <svg className="-mt-1 ml-1 size-4 shrink-0" viewBox="0 0 16 16" fill="none" stroke="currentColor">{ICONS.eraser}</svg>
                        </>
                    ) : (
                        <Icon name={name} />
                    )}
                </button>
            ))}
        </nav>
    );
}

// Small shared pieces

function Icon({ name }) {
    return (
        <svg className="size-4 shrink-0" viewBox="0 0 16 16" fill="none" stroke="currentColor">
            {ICONS[name]}
        </svg>
    );
}

function IconButton({ icon, label, active }) {
    return (
        <button aria-label={label} className={clsx("flex size-4 items-center justify-center", active && "bg-[#ddd]")}>
            <Icon name={icon} />
        </button>
    );
}

function ArrowButton({ label, d }) {
    return (
        <button aria-label={label} className="flex h-full w-4 items-center justify-center border-t border-r-2 border-b-2 border-[#777] border-t-white">
            <svg className="h-[7px] w-1" viewBox="0 0 4 7"><path d={d} /></svg>
        </button>
    );
}

function BoxButton({ className, corner, children }) {
    return (
        <button className={clsx("relative flex h-5 shrink-0 items-center justify-center border border-[#bbb] bg-[#f5f5f5] text-[13px]", className)}>
            {children}
            {corner && <Corner />}
        </button>
    );
}

function Corner() {
    return <i className="absolute right-0 bottom-0 size-1 bg-[linear-gradient(135deg,transparent_50%,#999_50%)]" />;
}

function Spinner({ className }) {
    return (
        <div className={clsx("flex h-5 flex-col border border-[#bbb] bg-[#f5f5f5]", className)}>
            <button aria-label="증가" className="flex flex-1 items-center justify-center border-b border-[#bbb]">
                <svg className="h-[3px] w-1.5" viewBox="0 0 6 3" fill="#333"><path d="M3 0l3 3h-6z" /></svg>
            </button>
            <button aria-label="감소" className="flex flex-1 items-center justify-center">
                <svg className="h-[3px] w-1.5" viewBox="0 0 6 3" fill="#333"><path d="M0 0h6l-3 3z" /></svg>
            </button>
        </div>
    );
}

function Folder({ open }) {
    return (
        <svg className="size-3 shrink-0" viewBox="0 0 12 12" fill={open ? "#444" : "none"} stroke="#444">
            <path d="M.5 1.500h4l1 1h6v8h-11z" />
            {open ? <path d="M3 6.500h6" stroke="#fff" /> : <path d="M3 6.500h6M6 4v5" />}
        </svg>
    );
}

function BoxMark({ dark, close }) {
    return (
        <button aria-label={close ? "닫기" : "최대화"} className={clsx("flex h-[9px] w-[9px] items-center justify-center border", dark ? "border-black" : "border-[#bbb]")}>
            <svg className="size-[7px] shrink-0" viewBox="0 0 7 7" fill="none" stroke={dark ? "#000" : "#444"}>
                {close ? <path d="M1 1l5 5M6 1l-5 5" /> : <path d="M1.500 1.500h4v4h-4z" />}
            </svg>
        </button>
    );
}
